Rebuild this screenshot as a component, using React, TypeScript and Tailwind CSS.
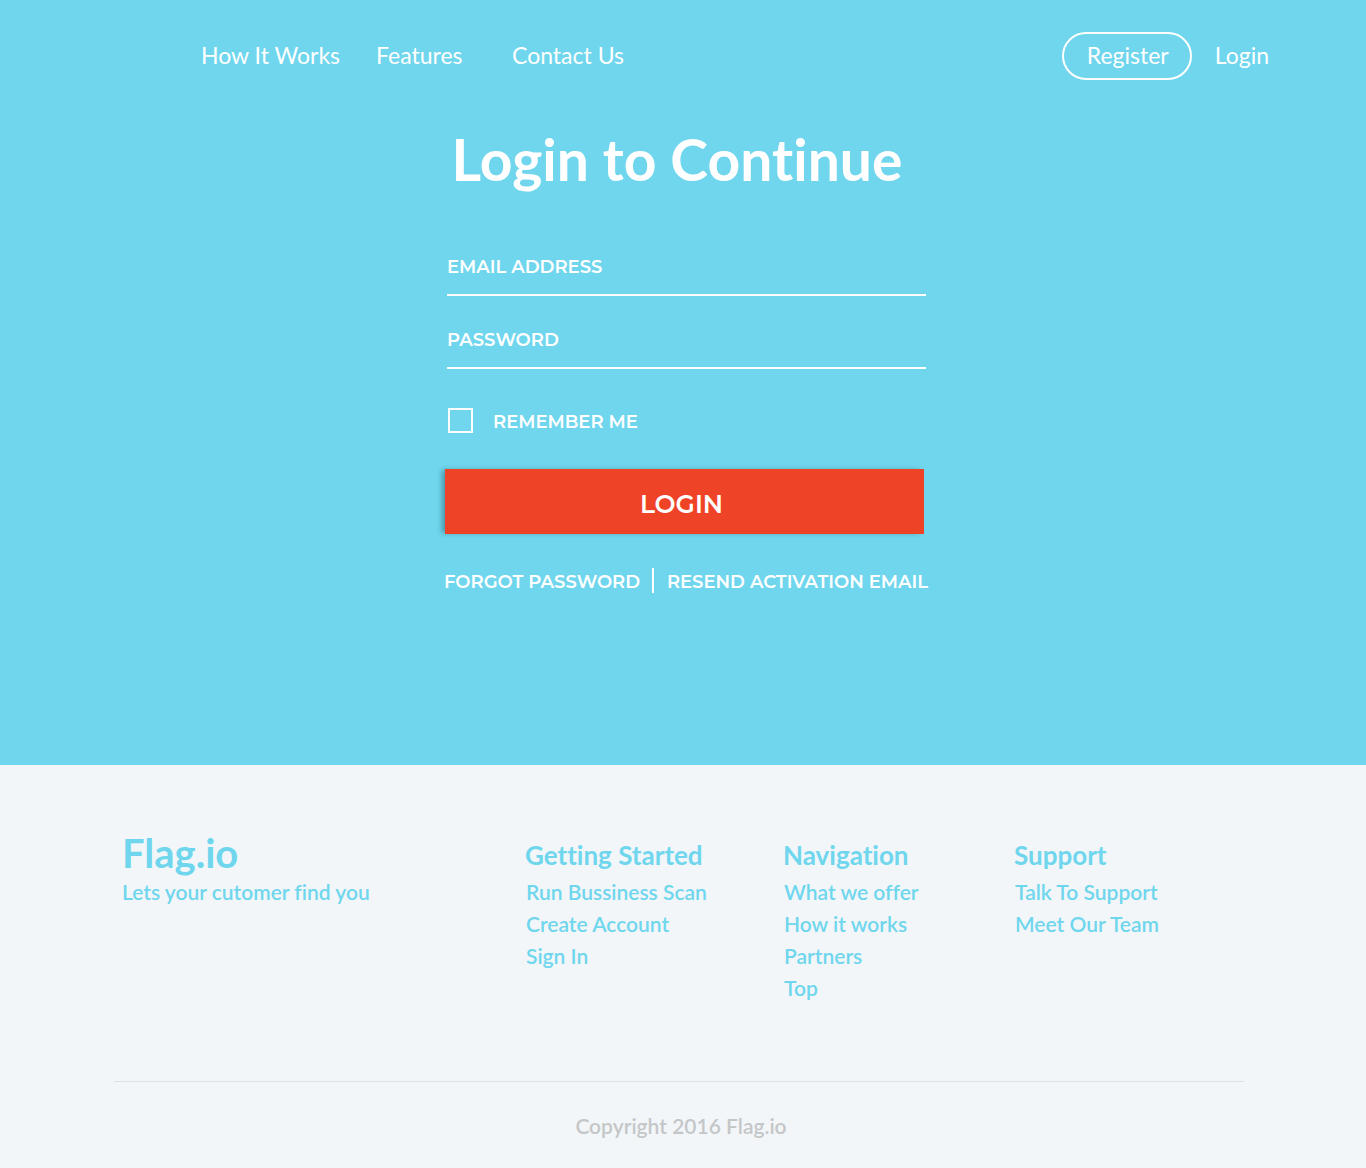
const columns = [
  { title: "Getting Started", links: ["Run Bussiness Scan", "Create Account", "Sign In"] },
  { title: "Navigation", links: ["What we offer", "How it works", "Partners", "Top"] },
  { title: "Support", links: ["Talk To Support", "Meet Our Team"] },
];

function Header() {
  return (
    <header className="flex h-28 items-center pr-[97px] pl-[201px] text-[23px] whitespace-nowrap">
      <nav className="flex items-center pb-[2px]">
        <a href="#how" className="w-[175px]">How It Works</a>
        <a href="#features" className="w-[136px]">Features</a>
        <a href="#contact">Contact Us</a>
      </nav>
      <div className="ml-auto flex items-center gap-[23px]">
        <a href="#register" className="flex h-12 w-[130px] items-center justify-center rounded-full border-2 border-white pb-[2px] pl-[2px]">
          Register
        </a>
        <a href="#login" className="pb-[2px]">Login</a>
      </div>
    </header>
  );
}

function Field({ type, label }: { type: string; label: string }) {
  return (
    <input
      type={type}
      aria-label={label}
      placeholder={label}
      className="mr-[2px] ml-[3px] block h-[61px] border-b-2 border-white bg-transparent pt-[5px] outline-none placeholder:text-white placeholder:opacity-100"
    />
  );
}

function LoginForm() {
  return (
    <form className="mt-10 font-['Montserrat','Lato',sans-serif] text-[18px] font-semibold" onSubmit={(e) => e.preventDefault()}>
      <div className="flex flex-col gap-3">
        <Field type="email" label="EMAIL ADDRESS" />
        <Field type="password" label="PASSWORD" />
      </div>
      <label className="mt-[39px] ml-1 flex h-[25px] items-center gap-5">
        <input type="checkbox" className="size-[25px] appearance-none border-2 border-white checked:bg-white" />
        <span className="pt-[3px]">REMEMBER ME</span>
      </label>
      <button type="submit" className="mt-9 mr-1 ml-px block h-[65px] w-[calc(100%-5px)] bg-[#ef4328] pt-[6px] pr-[6px] text-[25px] shadow-[-4px_0_5px_-1px_rgba(0,0,0,0.3)]">
        LOGIN
      </button>
      <div className="mt-[34px] flex h-[25px] items-center justify-between whitespace-nowrap">
        <a href="#forgot" className="pt-[3px]">FORGOT PASSWORD</a>
        <span className="h-full w-[2px] bg-white" />
        <a href="#resend" className="pt-[3px]">RESEND ACTIVATION EMAIL</a>
      </div>
    </form>
  );
}

export default function App() {
  return (
    <div className="min-h-screen bg-[#f2f6f9] font-['Lato',sans-serif] text-[#6fd6ed] [font-variant-ligatures:none]">
      <div className="bg-[#6fd6ed] pb-[172px] text-white">
        <Header />
        <main className="mx-auto w-[490px] max-w-full pt-3 pl-[6px]">
          <h1 className="-ml-[18px] text-center text-[57px] leading-[71px] font-bold whitespace-nowrap">Login to Continue</h1>
          <LoginForm />
        </main>
      </div>
      <footer className="pt-[65px] pr-[122px] pl-[114px] font-semibold">
        <div className="grid grid-cols-[403fr_258fr_231fr_230fr] pl-2 whitespace-nowrap">
          <div>
            <h2 className="text-[40px] leading-[46px] font-bold">Flag.io</h2>
            <p className="text-[21px] leading-8">Lets your cutomer find you</p>
          </div>
          {columns.map((column) => (
            <nav key={column.title} aria-label={column.title}>
              <h3 className="pt-[6px] pb-[2px] text-[26px] leading-[38px] font-bold">{column.title}</h3>
              <ul className="pl-px text-[21px] leading-8">
                {column.links.map((link) => (
                  <li key={link}><a href="#">{link}</a></li>
                ))}
              </ul>
            </nav>
          ))}
        </div>
        <p className="mt-[77px] border-t border-[#dce1e4] pt-7 pb-[26px] pl-1 text-center text-[21px] leading-8 text-[#c5c6c8]">
          Copyright 2016 Flag.io
        </p>
      </footer>
    </div>
  );
}
